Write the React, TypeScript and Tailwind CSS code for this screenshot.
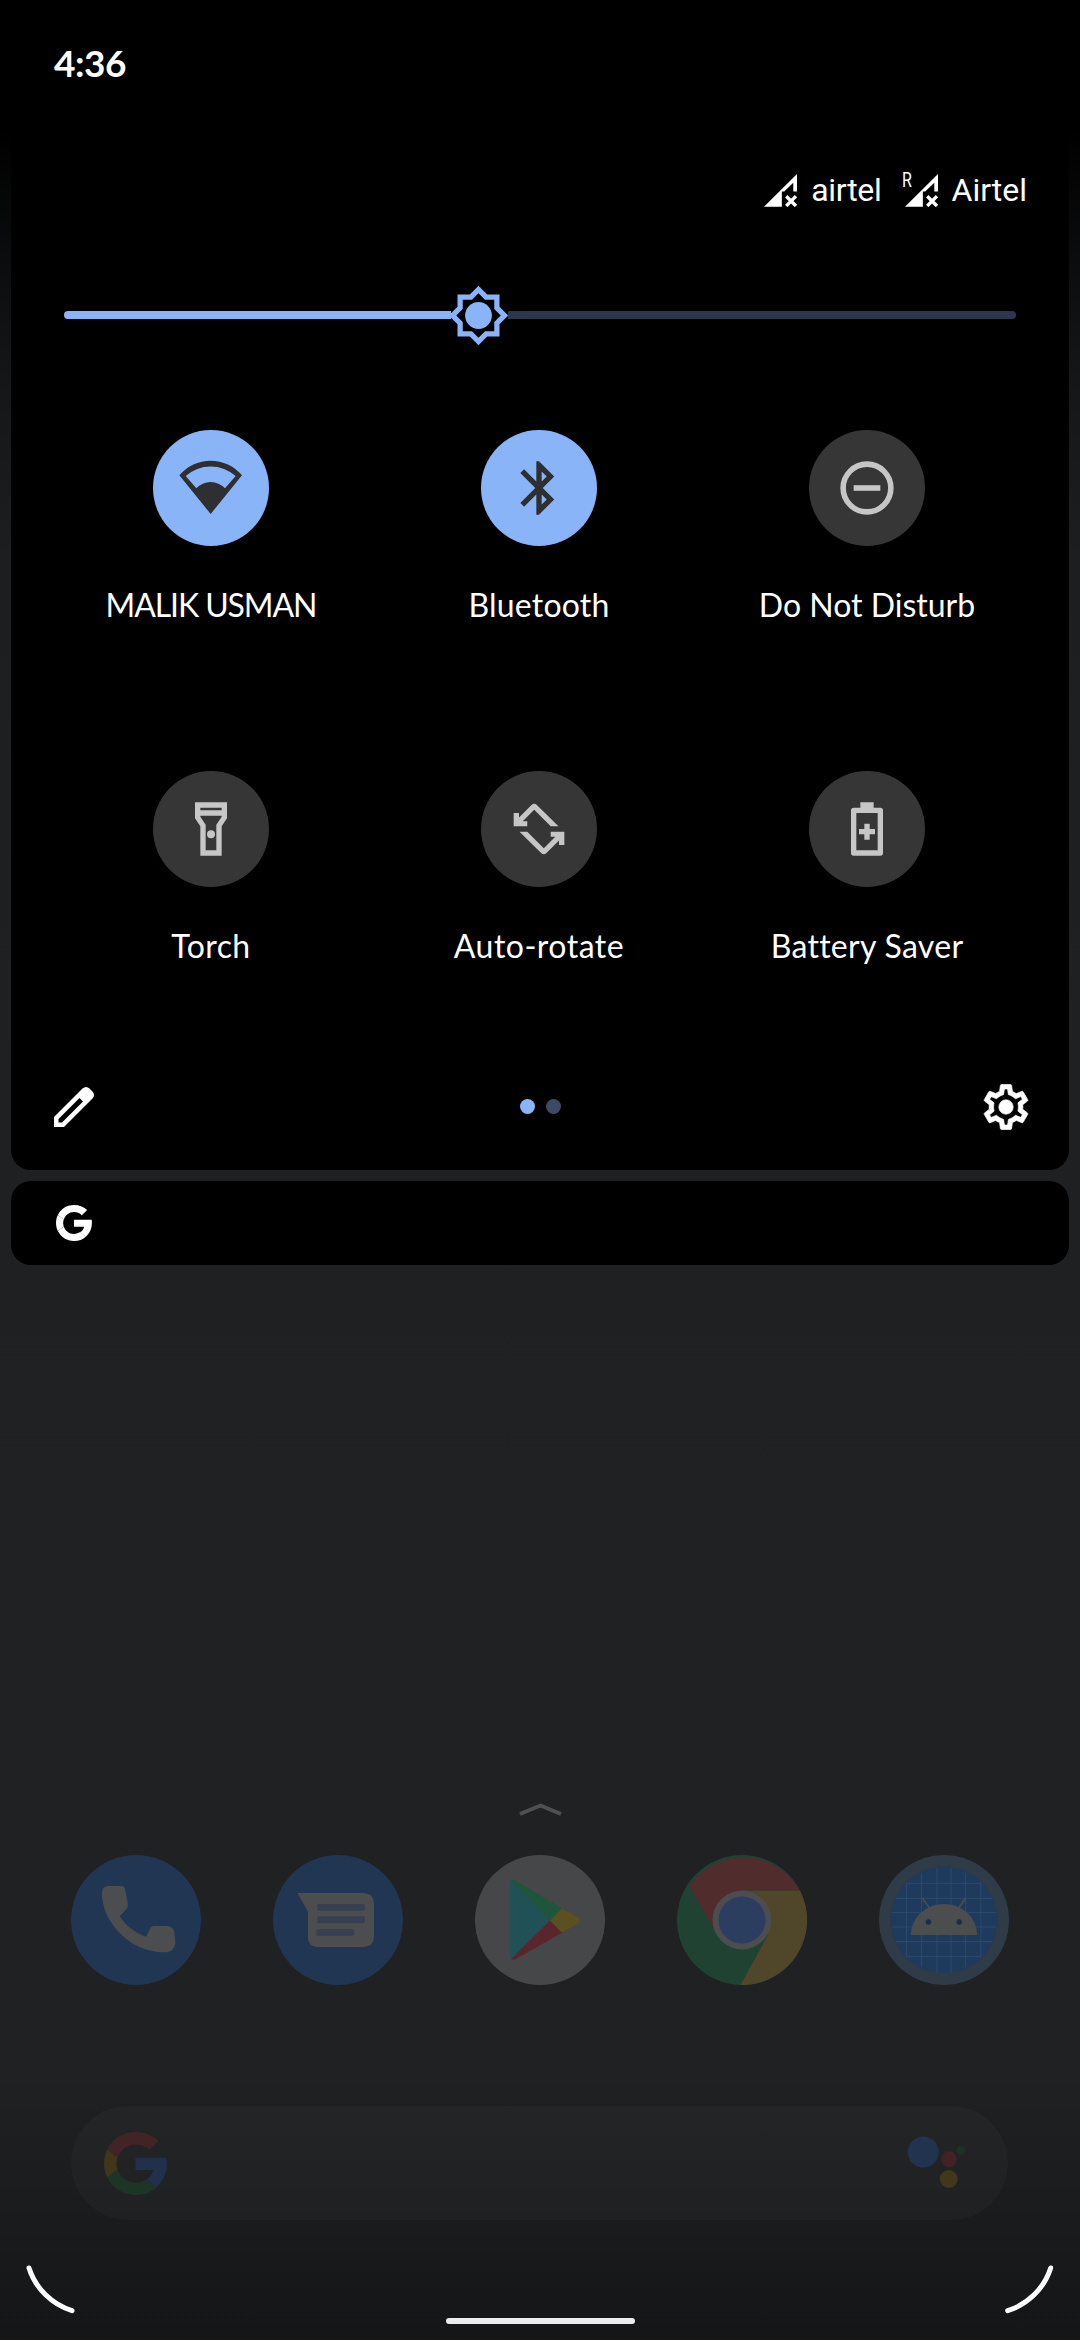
import type { ReactNode } from "react";

const tileIcon = "h-16 w-16 -mt-px";

function WifiIcon() {
  return (
    <svg viewBox="159 90 348 348" className="h-[116px] w-[116px]" fill="#2d2f31">
      <path
        fillRule="evenodd"
        d="M332 342 L238 226 A123 123 0 0 1 426 226 Z M257 228 L289 265 A58 58 0 0 1 375 265 L407 228 A112 112 0 0 0 257 228 Z"
      />
    </svg>
  );
}

function BluetoothIcon() {
  return (
    <svg viewBox="0 0 24 24" className={tileIcon} fill="#2d2f31">
      <path d="M17.71 7.71L12 2h-1v7.59L6.41 5 5 6.41 10.59 12 5 17.59 6.41 19 11 14.41V22h1l5.71-5.71-4.3-4.29 4.3-4.29zM13 5.83l1.88 1.88L13 9.59V5.83zm1.88 10.46L13 18.17v-3.76l1.88 1.88z" />
    </svg>
  );
}

function DndIcon() {
  return (
    <svg viewBox="0 0 24 24" className={tileIcon} fill="none" stroke="#c6c6c6" strokeWidth="2.1">
      <circle cx="12" cy="12" r="8.95" />
      <path d="M7 12h10" />
    </svg>
  );
}

function TorchIcon() {
  return (
    <svg viewBox="0 0 24 24" className={tileIcon} fill="#c6c6c6">
      <path d="M18 2H6v6l2 3v11h8V11l2-3V2zm-2 2v1H8V4h8zm-2 6.4V20h-4v-9.61l-2-3V7h8v.39l-2 3.01z" />
      <circle cx="12" cy="14" r="1.5" />
    </svg>
  );
}

function RotateIcon() {
  const half = "M2.5 6H4.5V7.7L9.2 3Q10.2 2 11.2 3L19.3 11H16.4L10.2 4.8L5.9 9.1H7.6V11H2.5Z";
  return (
    <svg viewBox="0 0 24 24" className={tileIcon} fill="#c6c6c6">
      <path d={half} />
      <path d={half} transform="rotate(180 12 12)" />
    </svg>
  );
}

function BatteryIcon() {
  return (
    <svg viewBox="0 0 24 24" className={tileIcon} fill="#c6c6c6">
      <path
        fillRule="evenodd"
        d="M9.5 2h5v2H17a1 1 0 0 1 1 1v16a1 1 0 0 1-1 1H7a1 1 0 0 1-1-1V5a1 1 0 0 1 1-1h2.5zM8 6v14h8V6z"
      />
      <path d="M11 10h2v2h2v2h-2v2h-2v-2H9v-2h2z" />
    </svg>
  );
}

function SignalIcon() {
  return (
    <svg viewBox="187 98 98 98" className="h-[33px] w-[33px]" fill="#fff">
      <path d="M187 195L285 98V150H274V124L247 150H240V195Z" />
      <path d="M253 164L282 193M282 164L253 193" stroke="#fff" strokeWidth="10" />
    </svg>
  );
}

type TileProps = { label: string; icon: ReactNode; on?: boolean; tracking?: string };

function Tile({ label, icon, on, tracking = "" }: TileProps) {
  return (
    <div className="flex flex-col items-center">
      <div
        className={`flex h-[116px] w-[116px] items-center justify-center rounded-full ${
          on ? "bg-[#8ab4f8]" : "bg-[#363636]"
        }`}
      >
        {icon}
      </div>
      <span className={`mt-[39px] whitespace-nowrap text-[32px] leading-10 ${tracking}`}>{label}</span>
    </div>
  );
}

const tiles: TileProps[] = [
  { label: "MALIK USMAN", icon: <WifiIcon />, on: true, tracking: "tracking-[-1.1px]" },
  { label: "Bluetooth", icon: <BluetoothIcon />, on: true, tracking: "tracking-[0.2px]" },
  { label: "Do Not Disturb", icon: <DndIcon /> },
  { label: "Torch", icon: <TorchIcon />, tracking: "tracking-[0.4px]" },
  { label: "Auto-rotate", icon: <RotateIcon />, tracking: "tracking-[0.5px]" },
  { label: "Battery Saver", icon: <BatteryIcon />, tracking: "tracking-[0.3px]" },
];

function BrightnessSlider() {
  return (
    <div className="mt-[73px] flex h-16 items-center px-[53px]">
      <div className="h-2 w-[387px] rounded-l-full bg-[#8ab4f8]" />
      <svg viewBox="0 0 24 24" className="-ml-1 h-[63px] w-[63px]">
        <path
          fill="#8ab4f8"
          d="M20 15.31L23.31 12 20 8.69V4h-4.69L12 .69 8.69 4H4v4.69L.69 12 4 15.31V20h4.69L12 23.31 15.31 20H20z"
        />
        <path fill="#000" d="M18 14.48V18h-3.52L12 20.48 9.52 18H6v-3.52L3.52 12 6 9.52V6h3.52L12 3.52 14.48 6H18v3.52L20.48 12z" />
        <circle cx="12" cy="12" r="5.1" fill="#8ab4f8" />
      </svg>
      <div className="-ml-0.5 h-2 flex-1 rounded-r-full bg-[#2c374d]" />
    </div>
  );
}

function GoogleG({ className, colors }: { className: string; colors: [string, string, string, string] }) {
  return (
    <svg viewBox="3.06 3 42 42" className={className}>
      <path fill={colors[0]} d="M24 11.3c3.54 0 6.71 1.22 9.21 3.6l6.15-6.15C35.9 5.38 30.47 3 24 3 15.4 3 8.5 7.8 5.3 14.6l6.9 5.6C13.9 15 18.5 11.3 24 11.3z" />
      <path fill={colors[1]} d="M12.1 28c-.4-1.25-.7-2.6-.7-4s.3-2.75.7-4l-6.9-5.4C3.8 17.4 3.1 20.6 3.1 24s.7 6.6 2.1 9.4z" />
      <path fill={colors[2]} d="M24 45c5.7 0 10.5-1.9 14-5.1l-6.9-5.3c-1.9 1.25-4.3 2.1-7.1 2.1-5.6 0-10.2-3.7-11.9-8.7l-6.9 5.4C8.5 40.2 15.6 45 24 45z" />
      <path fill={colors[3]} d="M45 24c0-1.4-.1-2.6-.35-3.8H24v8.1h11.8c-.5 2.7-2.1 4.9-4.7 6.4l6.9 5.3C42.4 35.9 45 30.5 45 24z" />
    </svg>
  );
}

function PencilIcon() {
  return (
    <svg viewBox="54 1087 40 40" className="h-10 w-10">
      <path
        fill="#fff"
        fillRule="evenodd"
        d="M54 1127V1117L82.5 1088.5Q86 1085.5 89.5 1088.5L92.5 1091.5Q95.5 1095 92.5 1098.5L64 1127ZM58.5 1122.5H62L83 1101.5L79.5 1098L58.5 1119Z"
      />
    </svg>
  );
}

function GearIcon() {
  return (
    <svg viewBox="0 0 24 24" className="h-[54px] w-[54px]" fill="#fff" stroke="#fff" strokeWidth="0.3" strokeLinejoin="round">
      <path d="M19.43 12.98c.04-.32.07-.64.07-.98 0-.34-.03-.66-.07-.98l2.11-1.65c.19-.15.24-.42.12-.64l-2-3.46c-.09-.16-.26-.25-.44-.25-.06 0-.12.01-.17.03l-2.49 1c-.52-.4-1.08-.73-1.69-.98l-.38-2.65C14.46 2.18 14.25 2 14 2h-4c-.25 0-.46.18-.49.42l-.38 2.65c-.61.25-1.17.59-1.69.98l-2.49-1c-.06-.02-.12-.03-.18-.03-.17 0-.34.09-.43.25l-2 3.46c-.13.22-.07.49.12.64l2.11 1.65c-.04.32-.07.65-.07.98 0 .33.03.66.07.98l-2.11 1.65c-.19.15-.24.42-.12.64l2 3.46c.09.16.26.25.44.25.06 0 .12-.01.17-.03l2.49-1c.52.4 1.08.73 1.69.98l.38 2.65c.03.24.24.42.49.42h4c.25 0 .46-.18.49-.42l.38-2.65c.61-.25 1.17-.59 1.69-.98l2.49 1c.06.02.12.03.18.03.17 0 .34-.09.43-.25l2-3.46c.12-.22.07-.49-.12-.64l-2.11-1.65zm-1.98-1.71c.04.31.05.52.05.73 0 .21-.02.43-.05.73l-.14 1.13.89.7 1.08.84-.7 1.21-1.27-.51-1.04-.42-.9.68c-.43.32-.84.56-1.25.73l-1.06.43-.16 1.13-.2 1.35h-1.4l-.19-1.35-.16-1.13-1.06-.43c-.43-.18-.83-.41-1.23-.71l-.91-.7-1.06.43-1.27.51-.7-1.21 1.08-.84.89-.7-.14-1.13c-.03-.31-.05-.54-.05-.74s.02-.43.05-.73l.14-1.13-.89-.7-1.08-.84.7-1.21 1.27.51 1.04.42.9-.68c.43-.32.84-.56 1.25-.73l1.06-.43.16-1.13.2-1.35h1.39l.19 1.35.16 1.13 1.06.43c.43.18.83.41 1.23.71l.91.7 1.06-.43 1.27-.51.7 1.21-1.07.85-.89.7.14 1.13z" />
      <circle cx="12" cy="12" r="3.2" />
    </svg>
  );
}

function PhoneApp() {
  return (
    <svg viewBox="93 225 390 390" className="h-[130px] w-[130px]">
      <circle cx="288" cy="420" r="195" fill="#213652" />
      <path
        fill="#4b4d4e"
        d="M186 338Q186 318 206 318H243Q254 318 255 328L264 372Q265 380 260 386L239 408Q265 452 318 470L331 444Q335 438 342 438H380Q400 438 403 457L406 485Q405 517 372 517Q290 514 235 455Q186 400 186 338Z"
      />
    </svg>
  );
}

function MessagesApp() {
  return (
    <svg viewBox="699 225 390 390" className="h-[130px] w-[130px]">
      <circle cx="894" cy="420" r="195" fill="#213652" />
      <path fill="#4b4d4e" d="M776 339H968Q1002 339 1002 373V468Q1002 501 968 501H836Q804 501 804 470V395L774 343Q773 339 776 339Z" />
      <g fill="#364051">
        <rect x="832" y="372" width="143" height="20" rx="5" />
        <rect x="832" y="409" width="143" height="21" rx="5" />
        <rect x="829" y="447" width="113" height="20" rx="5" />
      </g>
    </svg>
  );
}

function PlayApp() {
  return (
    <svg viewBox="0 0 130 130" className="h-[130px] w-[130px]">
      <circle cx="65" cy="65" r="65" fill="#464749" />
      <path fill="#205156" d="M34.7 28Q35 26 37 25.5L75 65.5L37 104Q34.7 103 34.7 101Z" />
      <path fill="#1f553b" d="M36 25.5Q38 24 41 26L87 53.3L75 65.5Z" />
      <path fill="#5a252c" d="M36 104Q38 105.500 41 104L87 77.7L75 65.5Z" />
      <path fill="#5a5020" d="M87 53.3L103 62.5Q107 65.5 103 68.5L87 77.7L75 65.5Z" />
    </svg>
  );
}

function ChromeApp() {
  return (
    <svg viewBox="0 0 130 130" className="h-[130px] w-[130px]">
      <circle cx="65" cy="65" r="65" fill="#1f4232" />
      <path fill="#504629" d="M65 35.5H123A65 65 0 0 1 63.4 130L91 80Z" />
      <path fill="#502c2d" d="M12.5 31A65 65 0 0 1 123 35.5H65L40 80Z" />
      <circle cx="65" cy="65" r="29.5" fill="#4b4d50" />
      <circle cx="65" cy="65" r="23.5" fill="#2c3e60" />
    </svg>
  );
}

function AndroidApp() {
  return (
    <svg viewBox="0 0 130 130" className="h-[130px] w-[130px]">
      <circle cx="65" cy="65" r="65" fill="#2f3b47" />
      <circle cx="65" cy="65" r="53.4" fill="#1e3a5c" />
      <path
        stroke="#304d6e"
        strokeWidth="0.9"
        d="M42.6 18V112M58 13V118M72 13V118M86.7 18V112M101.9 28V102M27.4 28V102M28 28.3H102M17 43.3H113M13 57.7H117M13 72H117M17 86.7H113M28 101.7H102"
      />
      <path stroke="#4b4d4e" strokeWidth="1.6" strokeLinecap="round" d="M43.6 43.3L51 54M86.4 43.3L79 54" />
      <path fill="#4b4d4e" d="M31.8 80A33.2 31 0 0 1 98.2 80Z" />
      <circle cx="49.4" cy="67" r="2.7" fill="#1f2c44" />
      <circle cx="80.2" cy="67" r="2.7" fill="#1f2c44" />
    </svg>
  );
}

export default function App() {
  return (
    <div className="flex h-[2340px] w-[1080px] flex-col overflow-hidden bg-[linear-gradient(to_bottom,#000_0px,#000_130px,#0b0c0d_260px,#151617_380px,#1d1e20_560px,#1f2022_1100px,#202123_1700px,#202123_2070px,#1a1b1c_2225px,#161718_2300px,#151617_2340px)] font-['Lato',sans-serif] text-white">
      <section className="ml-[11px] flex h-[1170px] w-[1058px] flex-col rounded-b-[20px] bg-black">
        <div className="mt-[39px] pl-[43px] text-[37px] font-bold leading-[48px] tracking-[-0.5px]">4:36</div>

        <div className="mt-[83px] flex h-10 items-center justify-end pr-[42px] font-['Roboto',sans-serif] text-[32px] leading-10">
          <SignalIcon />
          <span className="ml-[14px] tracking-[-0.3px]">airtel</span>
          <span className="relative ml-[23px]">
            <SignalIcon />
            <span className="absolute -left-[3px] -top-[4px] origin-left scale-x-[0.8] text-xl leading-5">R</span>
          </span>
          <span className="ml-[14px]">Airtel</span>
        </div>

        <BrightnessSlider />

        <div className="ml-9 mt-[83px] grid w-[984px] grid-cols-3 gap-y-[146px]">
          {tiles.map((t) => (
            <Tile key={t.label} {...t} />
          ))}
        </div>

        <div className="mt-[113px] grid h-14 grid-cols-3 items-center pl-[43px] pr-9">
          <PencilIcon />
          <div className="-mt-px flex justify-center gap-[11px] pr-[5px]">
            <span className="h-[15px] w-[15px] rounded-full bg-[#8ab4f8]" />
            <span className="h-[15px] w-[15px] rounded-full bg-[#3e4a64]" />
          </div>
          <div className="flex justify-end">
            <GearIcon />
          </div>
        </div>
      </section>

      <section className="ml-[11px] mt-[11px] flex h-[84px] w-[1058px] items-center rounded-[20px] bg-black pl-[45px]">
        <GoogleG className="h-9 w-9" colors={["#fff", "#fff", "#fff", "#fff"]} />
      </section>

      <svg viewBox="0 0 44 20" className="ml-[519px] mt-[535px] h-5 w-11" fill="none" stroke="#4e5052" strokeWidth="3.8">
        <path d="M1 14L21.5 5.5L42 14" />
      </svg>

      <div className="mt-[35px] flex gap-[72px] pl-[71px]">
        <PhoneApp />
        <MessagesApp />
        <PlayApp />
        <ChromeApp />
        <AndroidApp />
      </div>

      <div className="ml-[71px] mt-[121px] flex h-[114px] w-[937px] items-center justify-between rounded-full bg-white/[0.025] pl-[33px] pr-[42px]">
        <GoogleG className="h-[63px] w-[63px]" colors={["#422426", "#40371a", "#1d3526", "#21304c"]} />
        <svg viewBox="905 2133 60 60" className="h-[60px] w-[60px]">
          <circle cx="922.2" cy="2152" r="15.5" fill="#21334f" />
          <circle cx="948" cy="2159.3" r="8" fill="#432226" />
          <circle cx="947.7" cy="2179" r="9" fill="#41381c" />
          <circle cx="959.8" cy="2150.3" r="4.5" fill="#1d3227" />
        </svg>
      </div>

      <div className="mt-10 flex h-16 items-end justify-between px-[26px]">
        <svg viewBox="26 2260 50 64" className="h-16 w-[50px]" fill="none" stroke="#fff" strokeWidth="5" strokeLinecap="round">
          <path d="M29 2268A66 66 0 0 0 72 2310.7" />
        </svg>
        <div className="h-1.5 w-[189px] rounded-full bg-[#ececee]" />
        <svg viewBox="1004 2260 50 64" className="h-16 w-[50px]" fill="none" stroke="#fff" strokeWidth="5" strokeLinecap="round">
          <path d="M1050.7 2268A66 66 0 0 1 1007.7 2310.7" />
        </svg>
      </div>
    </div>
  );
}
